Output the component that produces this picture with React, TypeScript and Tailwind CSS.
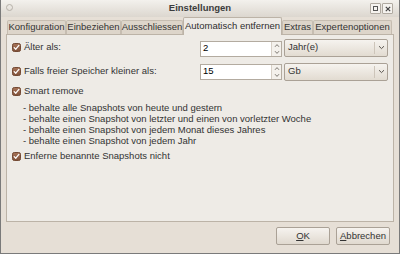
import React from "react";

const font = { fontFamily: '"Liberation Sans", Arial, sans-serif' };

function Check() {
  return (
    <svg width="9" height="9" viewBox="0 0 9 9" className="shrink-0">
      <defs>
        <linearGradient id="cb" x1="0" y1="0" x2="0" y2="1">
          <stop offset="0" stopColor="#a87458" />
          <stop offset="1" stopColor="#7f5038" />
        </linearGradient>
      </defs>
      <rect x="0.5" y="0.5" width="8" height="8" rx="1.8" fill="url(#cb)" stroke="#744a34" />
      <path d="M2.2 4.6 L3.8 6.2 L6.9 2.4" fill="none" stroke="#fff" strokeWidth="1.3" strokeLinecap="round" strokeLinejoin="round" />
    </svg>
  );
}

function Spin({ value }: { value: string }) {
  return (
    <div className="flex h-[16px] w-[82px] border border-[#b3aba0] bg-white">
      <div className="flex flex-1 items-center pl-[2px] text-[9.5px] text-black">{value}</div>
      <div className="flex w-[10px] flex-col items-center justify-between border-l border-[#d7d0c6] bg-[#f4f1ec] py-[1px]">
        <svg width="6" height="5" viewBox="0 0 6 5"><path d="M1 3.8 L3 1.6 L5 3.8" fill="none" stroke="#6f6a63" strokeWidth="0.9" /></svg>
        <svg width="6" height="5" viewBox="0 0 6 5"><path d="M1 1.2 L3 3.4 L5 1.2" fill="none" stroke="#6f6a63" strokeWidth="0.9" /></svg>
      </div>
    </div>
  );
}

function Combo({ value }: { value: string }) {
  return (
    <div className="flex h-[18px] w-[104px] items-center rounded-[2px] border border-[#aaa196] bg-gradient-to-b from-[#f6f3ef] to-[#e2dbd1]">
      <div className="flex-1 pl-[3px] text-[9.5px] text-[#333]">{value}</div>
      <div className="h-[12px] w-px bg-[#cdc5ba]" />
      <div className="flex w-[12px] items-center justify-center">
        <svg width="7" height="5" viewBox="0 0 7 5"><path d="M1 1.2 L3.5 3.6 L6 1.2" fill="none" stroke="#5a5550" strokeWidth="1" /></svg>
      </div>
    </div>
  );
}

const tabs = [
  { label: "Konfiguration", w: "w-[59px]" },
  { label: "Einbeziehen", w: "w-[55px]" },
  { label: "Ausschliessen", w: "w-[62px]" },
  { label: "Automatisch entfernen", w: "w-[99px]", active: true },
  { label: "Extras", w: "w-[31px]" },
  { label: "Expertenoptionen", w: "w-[79px]" },
];

export default function App() {
  return (
    <div style={font} className="flex h-[254px] w-[400px] flex-col overflow-hidden border-b border-l border-r border-[#7a7a7a] bg-[#e6dfd6] text-[#333]">
      {/* title bar */}
      <div className="relative flex h-[17px] shrink-0 items-center justify-center bg-gradient-to-b from-[#f3f1ed] to-[#dcd7cf]">
        <div className="absolute left-[5px] top-[4px] h-[7px] w-[7px] rounded-full border border-[#b5b0a8]" />
        <span className="text-[9.5px] font-bold text-[#3c3c3c]">Einstellungen</span>
        <div className="absolute right-[6px] top-[3px] flex gap-[1px]">
          <div className="flex h-[11px] w-[11px] items-center justify-center rounded-[1px] border border-[#b0aaa1] bg-[#f5f3ef]">
            <div className="h-[5px] w-[5px] border border-[#555]" />
          </div>
          <div className="flex h-[11px] w-[11px] items-center justify-center rounded-[1px] border border-[#b0aaa1] bg-[#f5f3ef]">
            <svg width="6" height="6" viewBox="0 0 6 6"><path d="M0.8 0.8 L5.2 5.2 M5.2 0.8 L0.8 5.2" stroke="#444" strokeWidth="1.2" /></svg>
          </div>
        </div>
      </div>

      <div className="flex flex-1 flex-col px-[5px]">
        {/* tabs */}
        <div className="flex h-[17px] items-end pl-[1px]">
          {tabs.map((t) =>
            t.active ? (
              <div key={t.label} className={`${t.w} relative z-10 -mb-px flex h-[18px] items-center justify-center rounded-t-[2px] border border-b-0 border-[#bcb3a7] bg-[#eeebe6] text-[9.5px] text-[#2e2e2e]`}>
                {t.label}
              </div>
            ) : (
              <div key={t.label} className={`${t.w} flex h-[14px] items-center justify-center rounded-t-[2px] border border-b-0 border-[#c6bdb1] bg-[#ddd5ca] text-[9.5px] text-[#333]`}>
                {t.label}
              </div>
            )
          )}
        </div>

        {/* panel */}
        <div className="flex h-[188px] flex-col border border-[#bcb3a7] bg-[#eeebe6] pl-[5px] pr-[5px] pt-[3px] text-[9.5px]">
          <div className="flex h-[19px] items-center">
            <Check />
            <span className="ml-[3px] flex-1">Älter als:</span>
            <div className="mt-[2px]">
              <Spin value="2" />
            </div>
            <div className="ml-[2px]">
              <Combo value="Jahr(e)" />
            </div>
          </div>
          <div className="mt-[5px] flex h-[19px] items-center">
            <Check />
            <span className="ml-[3px] flex-1">Falls freier Speicher kleiner als:</span>
            <Spin value="15" />
            <div className="ml-[2px]">
              <Combo value="Gb" />
            </div>
          </div>
          <div className="mt-[4px] flex h-[12px] items-center">
            <Check />
            <span className="ml-[3px]">Smart remove</span>
          </div>
          <div className="mt-[5px] flex flex-col pl-[11px] leading-[11px]">
            <span>- behalte alle Snapshots von heute und gestern</span>
            <span>- behalte einen Snapshot von letzter und einen von vorletzter Woche</span>
            <span>- behalte einen Snapshot von jedem Monat dieses Jahres</span>
            <span>- behalte einen Snapshot von jedem Jahr</span>
          </div>
          <div className="mt-[4px] flex h-[12px] items-center">
            <Check />
            <span className="ml-[3px]">Enferne benannte Snapshots nicht</span>
          </div>
        </div>

        {/* buttons */}
        <div className="mt-[5px] flex justify-end gap-[6px] pr-[4px]">
          <button className="flex h-[18px] w-[54px] items-center justify-center rounded-[2px] border border-[#aaa196] bg-gradient-to-b from-[#f6f3ef] to-[#e0d9cf] text-[9.5px] text-[#333]">
            <span><span className="underline">O</span>K</span>
          </button>
          <button className="flex h-[18px] w-[54px] items-center justify-center rounded-[2px] border border-[#aaa196] bg-gradient-to-b from-[#f6f3ef] to-[#e0d9cf] text-[9.5px] text-[#333]">
            <span><span className="underline">A</span>bbrechen</span>
          </button>
        </div>
      </div>
    </div>
  );
}
